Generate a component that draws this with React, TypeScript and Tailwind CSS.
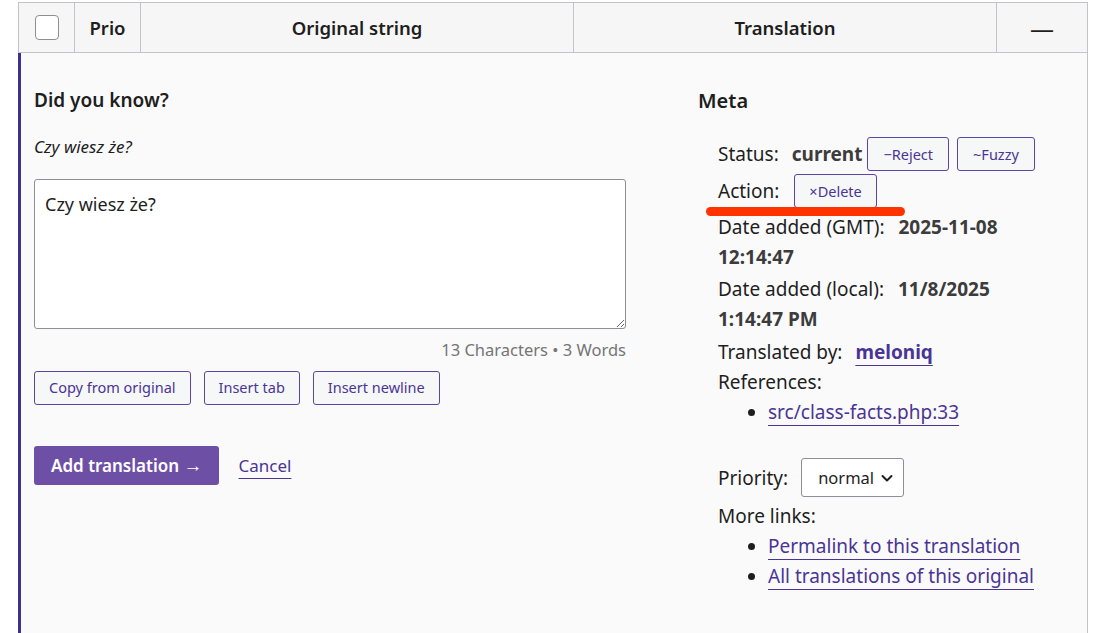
import React from "react";

const font = { fontFamily: '"Noto Sans", "Open Sans", sans-serif' };

const SmallButton: React.FC<{ children: React.ReactNode; tight?: boolean }> = ({ children, tight }) => (
  <button
    className={
      tight
        ? "h-[34px] px-[14px] rounded-[3px] border border-[#5b45a6] bg-[#f6f7f7] text-[14.5px] text-[#4a3596]"
        : "h-[34px] px-[15px] rounded-[3px] border border-[#5b45a6] bg-[#f6f7f7] text-[14.5px] text-[#4a3596]"
    }
  >
    {children}
  </button>
);

const MetaLink: React.FC<{ children: React.ReactNode; bold?: boolean }> = ({ children, bold }) => (
  <a
    href="#"
    className={
      bold
        ? "font-bold text-[#4a3596] underline decoration-[#4a3596] underline-offset-[6px] decoration-1"
        : "text-[#4a3596] underline decoration-[#4a3596] underline-offset-[6px] decoration-1"
    }
  >
    {children}
  </a>
);

const App: React.FC = () => {
  return (
    <div className="min-h-screen bg-white pt-[2px] pl-[18px] pr-[21px] text-[#1e1e1e]" style={font}>
      {/* header row */}
      <div className="flex h-[51px] border border-[#c3c4c7] bg-[#f6f6f6] text-[18.5px] font-semibold">
        <div className="w-[56px] flex items-center justify-center border-r border-[#c3c4c7]">
          <div className="w-[24px] h-[25px] rounded-[4px] border border-[#8c8f94] bg-white" />
        </div>
        <div className="w-[66px] flex items-center justify-center border-r border-[#c3c4c7]">Prio</div>
        <div className="w-[433px] flex items-center justify-center border-r border-[#c3c4c7]">Original string</div>
        <div className="w-[423px] flex items-center justify-center border-r border-[#c3c4c7]">Translation</div>
        <div className="flex-1 flex items-center justify-center font-normal text-[24px]">—</div>
      </div>

      {/* editor row */}
      <div className="flex min-h-[600px] border-l-[3px] border-l-[#3d2f94] border-r border-r-[#c3c4c7] bg-[#fafafa] pl-[13px] pr-[12px] pt-[35px]">
        <div className="w-[592px] shrink-0 flex flex-col">
          <div className="text-[19px] font-semibold leading-[25px]">Did you know?</div>
          <div className="mt-[23px] text-[17px] italic leading-[22px]">Czy wiesz że?</div>
          <textarea
            className="mt-[21px] h-[150px] w-full resize-y rounded-[3px] border border-[#8c8f94] bg-white px-[10px] py-[12px] text-[18px] leading-[24px] outline-none"
            defaultValue="Czy wiesz że?"
          />
          <div className="mt-[9px] text-right text-[16.5px] leading-[24px] text-[#757575]">13 Characters • 3 Words</div>
          <div className="mt-[9px] flex gap-[13px]">
            <SmallButton tight>Copy from original</SmallButton>
            <SmallButton tight>Insert tab</SmallButton>
            <SmallButton tight>Insert newline</SmallButton>
          </div>
          <div className="mt-[41px] flex items-center gap-[19px]">
            <button className="h-[39px] px-[17px] rounded-[3px] bg-[#6d50a6] text-[17px] font-semibold text-white">
              Add translation <span className="text-[19px]">→</span>
            </button>
            <a href="#" className="text-[17px] text-[#4a3596] underline decoration-1 underline-offset-[6px]">
              Cancel
            </a>
          </div>
        </div>

        <div className="relative ml-[72px] flex-1 flex flex-col text-[19px]">
          <div className="text-[20px] font-semibold leading-[25px]">Meta</div>
          <div className="mt-[24px] pl-[20px] w-[342px] flex flex-col leading-[30px]">
            <div className="flex items-center h-[34px] whitespace-nowrap">
              <span>Status:</span>
              <span className="ml-[13px] mr-[5px] font-bold text-[#3c3c3c]">current</span>
              <SmallButton>−Reject</SmallButton>
              <span className="w-[8px]" />
              <SmallButton>~Fuzzy</SmallButton>
            </div>
            <div className="flex items-center gap-[15px] mt-[3px] h-[34px]">
              <span>Action:</span>
              <SmallButton tight>×Delete</SmallButton>
            </div>
            <div className="mt-[4px]">
              Date added (GMT): <span className="ml-[9px] font-bold text-[#3c3c3c]">2025-11-08 12:14:47</span>
            </div>
            <div className="mt-[2px]">
              Date added (local): <span className="ml-[9px] font-bold text-[#3c3c3c]">11/8/2025 1:14:47 PM</span>
            </div>
            <div className="mt-[3px]">
              Translated by: <span className="ml-[8px]"><MetaLink bold>meloniq</MetaLink></span>
            </div>
            <div>References:</div>
            <ul className="list-disc pl-[50px]">
              <li><MetaLink>src/class-facts.php:33</MetaLink></li>
            </ul>
            <div className="mt-[31px] flex items-center gap-[13px]">
              <span>Priority:</span>
              <div className="flex h-[39px] items-center gap-[6px] rounded-[3px] border border-[#8c8f94] bg-white pl-[16px] pr-[9px] text-[16.5px]">
                normal
                <svg width="14" height="14" viewBox="0 0 14 14" fill="none">
                  <path d="M2.5 5l4.5 4.5 4.5-4.5" stroke="#1e1e1e" strokeWidth="2" strokeLinecap="round" strokeLinejoin="round" />
                </svg>
              </div>
            </div>
            <div className="mt-[4px]">More links:</div>
            <ul className="list-disc pl-[50px] whitespace-nowrap">
              <li><MetaLink>Permalink to this translation</MetaLink></li>
              <li><MetaLink>All translations of this original</MetaLink></li>
            </ul>
          </div>
          {/* red marker annotation */}
          <div className="absolute left-[8px] top-[119px] h-[9px] w-[199px] rounded-full bg-[#ff3300]" />
        </div>
      </div>
    </div>
  );
};

export default App;
